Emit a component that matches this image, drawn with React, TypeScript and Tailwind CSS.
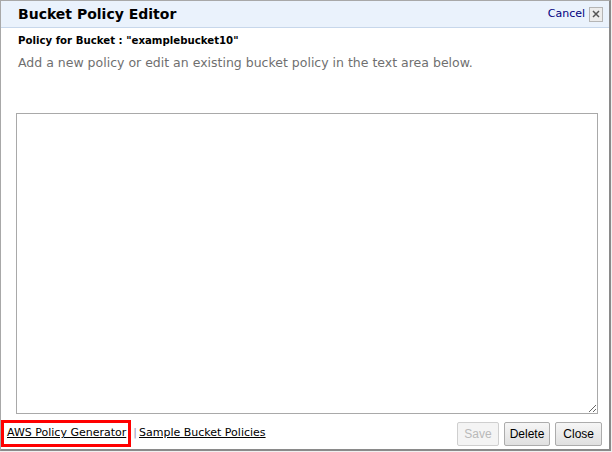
import React from "react";

export default function App() {
  const v = { fontFamily: '"DejaVu Sans", Verdana, sans-serif' };
  const a = { fontFamily: '"Liberation Sans", Arial, sans-serif' };
  return (
    <div className="w-[612px] h-[452px] bg-[#f0f0f0]">
      <div className="w-[611px] h-[451px] bg-white border-l border-t border-[#a8a8a8] border-r-2 border-b-2 border-r-[#8a8a8a] border-b-[#8a8a8a] flex flex-col" style={v}>
        <div className="h-[27px] shrink-0 bg-[#eaf2fc] border-b border-[#c7d7eb] flex items-center justify-between pl-[17px] pr-[6px]">
          <div className="text-[14px] font-bold text-black leading-none">Bucket Policy Editor</div>
          <div className="flex items-center gap-[4px]">
            <span className="text-[11px] text-[#000080]">Cancel</span>
            <span className="w-[14px] h-[15px] border border-[#b5b5b5] bg-[#ececec] flex items-center justify-center">
              <svg width="8" height="8" viewBox="0 0 8 8"><path d="M1 1L7 7M7 1L1 7" stroke="#555" strokeWidth="1.5" /></svg>
            </span>
          </div>
        </div>
        <div className="pl-[17px] pt-[6px] text-[10.2px] font-bold text-black leading-[14px]">Policy for Bucket : "examplebucket10"</div>
        <div className="pl-[17px] pt-[7px] text-[12.5px] text-[#6f6f6f] leading-[16px]">Add a new policy or edit an existing bucket policy in the text area below.</div>
        <div className="pl-[15px] pt-[42px]">
          <textarea className="block w-[582px] h-[301px] border border-[#a9a9a9] resize-y outline-none bg-white" />
        </div>
        <div className="flex items-center justify-between pt-[6px] pr-[7px]">
          <div className="flex items-center h-[27px] border-[3px] border-[#ff0000] pl-[3px] pr-[2px] text-[11px]">
            <span className="underline text-black">AWS Policy Generator</span>
          </div>
          <div className="flex-1 flex items-center text-[11px] pl-[2px]">
            <span className="text-[#9a8fb0]">|</span>
            <span className="underline text-black ml-[2px]">Sample Bucket Policies</span>
          </div>
          <div className="flex items-center gap-[5px]" style={a}>
            <button className="h-[24px] px-[6px] border border-[#cfcfcf] bg-[#f4f4f4] text-[12px] text-[#b9b9b9] rounded-[2px]">Save</button>
            <button className="h-[24px] px-[5px] border border-[#acacac] bg-gradient-to-b from-[#f6f6f6] to-[#e0e0e0] text-[12px] text-black rounded-[2px]">Delete</button>
            <button className="h-[24px] px-[7px] border border-[#acacac] bg-gradient-to-b from-[#f6f6f6] to-[#e0e0e0] text-[12px] text-black rounded-[2px]">Close</button>
          </div>
        </div>
      </div>
    </div>
  );
}
